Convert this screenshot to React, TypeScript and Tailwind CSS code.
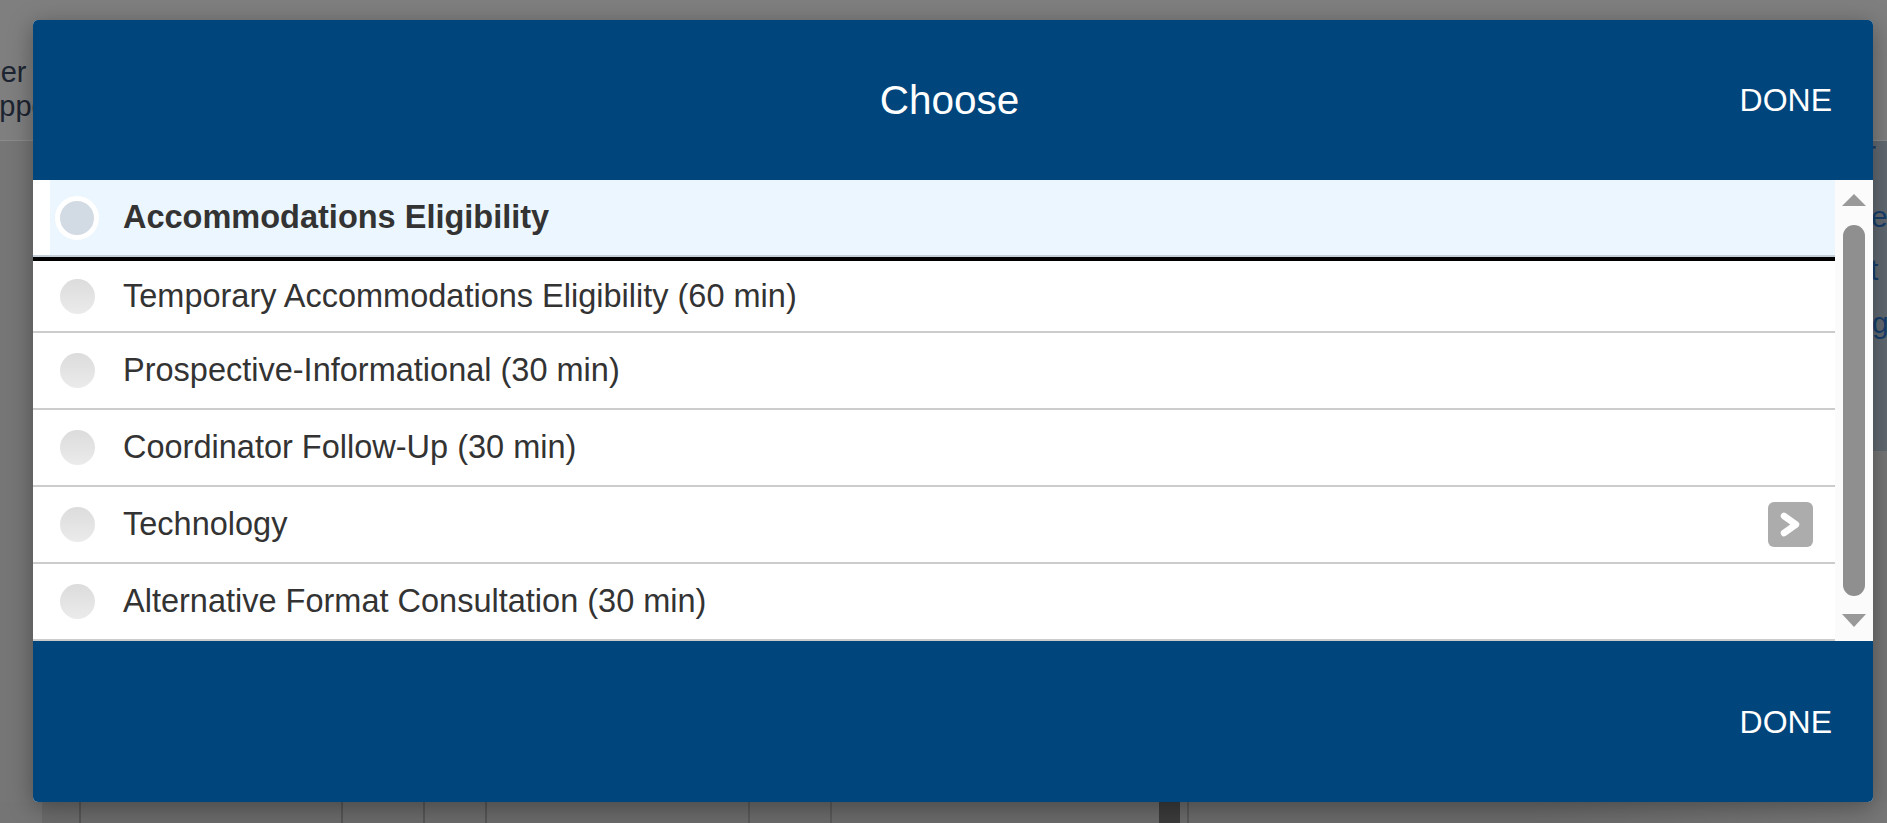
import React from "react";

const rows: { label: string; chevron?: boolean; h: string }[] = [
  { label: "Temporary Accommodations Eligibility (60 min)", h: "h-[72px]" },
  { label: "Prospective-Informational (30 min)", h: "h-[77px]" },
  { label: "Coordinator Follow-Up (30 min)", h: "h-[77px]" },
  { label: "Technology", chevron: true, h: "h-[77px]" },
  { label: "Alternative Format Consultation (30 min)", h: "h-[77px]" },
];

function Chevron() {
  return (
    <div className="ml-auto w-[45px] h-[45px] rounded-[6px] bg-[#acacac] flex items-center justify-center">
      <svg width="45" height="45" viewBox="0 0 45 45">
        <path d="M16 14 L28 22.5 L16 31" fill="none" stroke="#ffffff" strokeWidth="6.5" strokeLinejoin="round" strokeLinecap="round" />
      </svg>
    </div>
  );
}

export default function App() {
  return (
    <div className="relative w-[1887px] h-[823px] overflow-hidden bg-[#767676] font-['Liberation_Sans',Arial,sans-serif]">
      {/* page underneath the overlay */}
      <div className="flex flex-col h-full">
        <div className="h-[141px] bg-[#7f7f7f] border-b border-[#8b8b8b] overflow-hidden">
          <div className="pt-[55px] text-[29px] leading-[34px] text-[#1c2431] whitespace-nowrap">
            <div className="ml-[-46px]">Other</div>
            <div className="ml-[-20px]">Appointment</div>
          </div>
        </div>
        <div className="flex-1 flex">
          <div className="flex-1" />
          <div className="w-[40px] h-[310px] bg-[#616971] overflow-hidden text-[30px] text-[#173e6c] whitespace-nowrap">
            <div className="h-[22px] leading-[22px] pl-[19px]">r</div>
            <div className="h-[27px]" />
            <div className="h-[53px] leading-[53px] pl-[24px]">ec</div>
            <div className="h-[53px] leading-[53px] pl-[23px]">t</div>
            <div className="h-[53px] leading-[53px] pl-[25px]">g</div>
          </div>
        </div>
        <div className="h-[21px] flex bg-[#6b6b6b]">
          <div className="w-[42px] bg-[#757575]" />
          <div className="w-[39px] border-r-2 border-[#565656]" />
          <div className="w-[262px] border-r-2 border-[#565656]" />
          <div className="w-[82px] border-r-2 border-[#565656]" />
          <div className="w-[62px] border-r-2 border-[#565656]" />
          <div className="w-[263px] border-r-2 border-[#5a5a5a]" />
          <div className="w-[82px] border-r-2 border-[#5a5a5a]" />
          <div className="w-[327px]" />
          <div className="w-[21px] bg-[#3b3b3b]" />
          <div className="w-[9px] border-r-2 border-[#585858]" />
          <div className="flex-1 bg-linear-to-r from-[#6b6b6b] via-[#6b6b6b] to-[#777777]" />
        </div>
      </div>

      {/* modal */}
      <div className="absolute left-[33px] top-[20px] w-[1840px] h-[782px] flex flex-col rounded-[5px] overflow-hidden bg-white shadow-[0_5px_25px_rgba(0,0,0,0.35)]">
        <div className="h-[160px] shrink-0 bg-[#00457c] grid grid-cols-[1fr_auto_1fr] items-center text-white">
          <div />
          <div className="text-[40.5px] leading-none pr-[7px]">Choose</div>
          <div className="flex justify-end pr-[41px] text-[32px] leading-none">DONE</div>
        </div>

        <div className="h-[461px] shrink-0 flex">
          <div className="flex-1 flex flex-col">
            <div className="h-[77px] flex border-b-2 border-[#c4cfd9]">
              <div className="w-[17px] bg-white" />
              <div className="flex-1 bg-[#ecf6fe] flex items-center pl-[5px]">
                <div className="w-[44px] h-[44px] rounded-full border-[5px] border-white bg-[#d2dae3]" />
                <span className="ml-[24px] text-[32.5px] font-bold text-[#333333]">Accommodations Eligibility</span>
              </div>
            </div>
            <div className="h-[4px] bg-black" />
            {rows.map((r) => (
              <div key={r.label} className={`${r.h} shrink-0 border-b-2 border-[#cccccc] flex items-center pl-[27px] pr-[22px]`}>
                <div className="w-[35px] h-[35px] rounded-full bg-linear-to-b from-[#dcdcdc] to-[#ebebeb]" />
                <span className="ml-[28px] text-[32.5px] text-[#333333]">{r.label}</span>
                {r.chevron && <Chevron />}
              </div>
            ))}
          </div>
          <div className="w-[38px] bg-[#fbfbfb] flex flex-col items-center pt-[14px]">
            <svg width="24" height="12" viewBox="0 0 24 12">
              <polygon points="0,12 12,0 24,12" fill="#999999" />
            </svg>
            <div className="mt-[19px] w-[22px] h-[371px] rounded-full bg-[#8f8f8f]" />
            <svg className="mt-[18px]" width="24" height="13" viewBox="0 0 24 13">
              <polygon points="0,0 24,0 12,13" fill="#999999" />
            </svg>
          </div>
        </div>

        <div className="flex-1 bg-[#00457c] flex items-center justify-end pr-[41px] text-white text-[32px] leading-none">
          DONE
        </div>
      </div>
    </div>
  );
}
